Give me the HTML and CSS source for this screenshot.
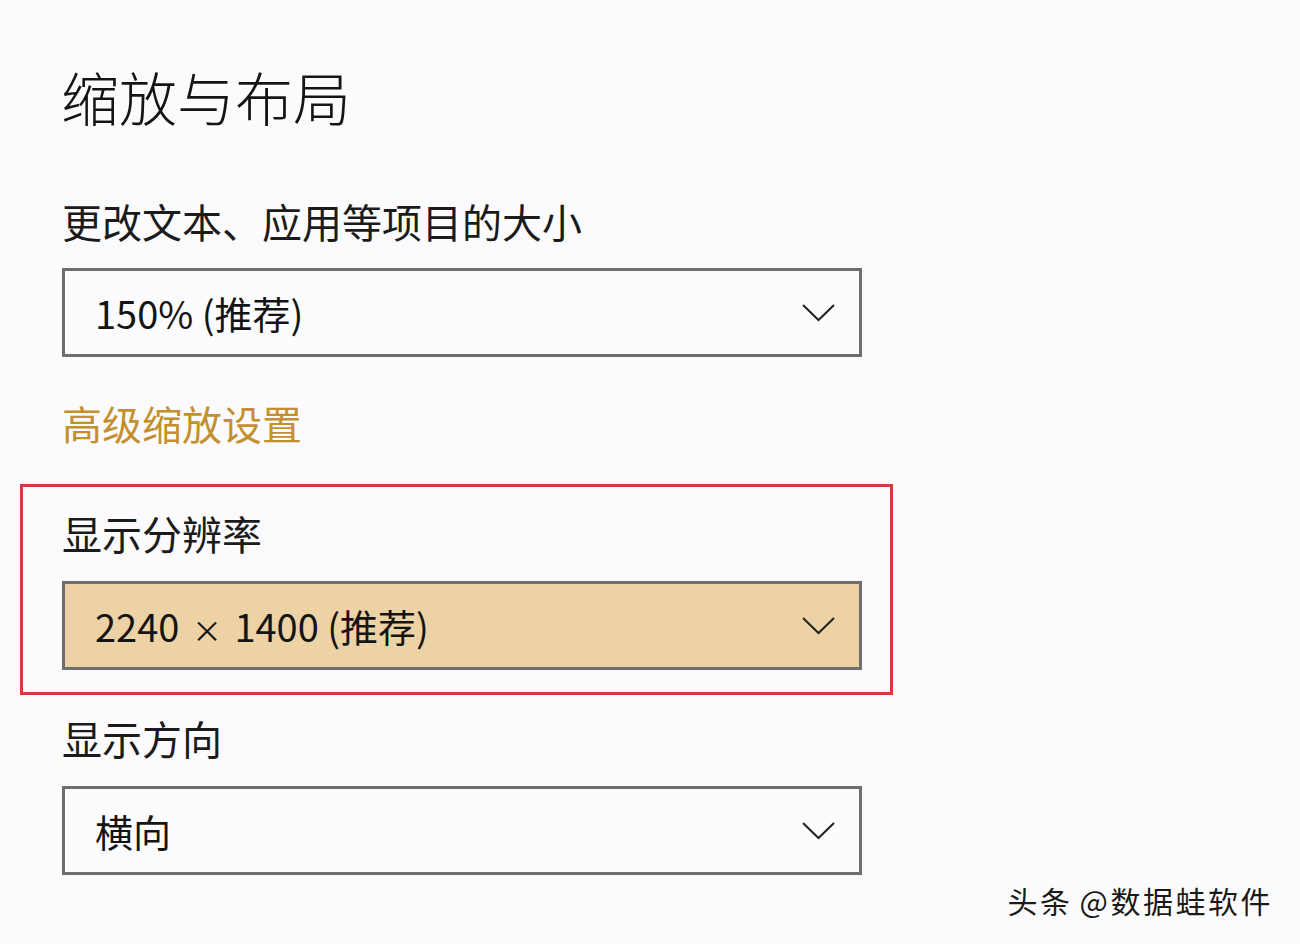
FILE: index.html
```html
<!DOCTYPE html>
<html lang="zh-CN">
<head>
<meta charset="utf-8">
<title>缩放与布局</title>
<link rel="stylesheet" href="styles.css">
</head>
<body>
<main class="page">
  <h1 class="title">缩放与布局</h1>

  <section class="group">
    <div class="label">更改文本、应用等项目的大小</div>
    <div class="select">
      <span class="select-text">150% (推荐)</span>
      <svg class="chevron" width="33" height="18" viewBox="0 0 33 18"><path d="M1 1 L16.5 16 L32 1" fill="none" stroke="#222" stroke-width="2"/></svg>
    </div>
    <a class="link" href="#">高级缩放设置</a>
  </section>

  <section class="group boxed">
    <div class="label">显示分辨率</div>
    <div class="select select-hl">
      <span class="select-text">2240 <span class="times">×</span> 1400 (推荐)</span>
      <svg class="chevron" width="33" height="18" viewBox="0 0 33 18"><path d="M1 1 L16.5 16 L32 1" fill="none" stroke="#222" stroke-width="2"/></svg>
    </div>
  </section>

  <section class="group last">
    <div class="label">显示方向</div>
    <div class="select">
      <span class="select-text">横向</span>
      <svg class="chevron" width="33" height="18" viewBox="0 0 33 18"><path d="M1 1 L16.5 16 L32 1" fill="none" stroke="#222" stroke-width="2"/></svg>
    </div>
  </section>

  <div class="watermark">头条 @数据蛙软件</div>
</main>
</body>
</html>
```

FILE: styles.css
```css
html, body {
  margin: 0;
  padding: 0;
  background: #fbfbfd;
}
body {
  font-family: "Noto Sans CJK SC", "Noto Sans", sans-serif;
  color: #1b1b1b;
  width: 1300px;
  height: 944px;
  overflow: hidden;
}
.page {
  position: relative;
  height: 944px;
  padding-left: 20px;
  box-sizing: border-box;
}
.title {
  margin: 0;
  padding: 61px 0 0 41px;
  font-size: 58px;
  line-height: 70px;
  font-weight: 300;
  height: 70px;
  color: #141414;
}
.group {
  display: flex;
  flex-direction: column;
  align-items: flex-start;
  padding-left: 42px;
}
.group:first-of-type {
  margin-top: 65px;
}
.label {
  font-size: 40px;
  line-height: 50px;
  height: 50px;
  font-weight: 400;
  margin-bottom: 22px;
}
.select {
  width: 800px;
  height: 89px;
  box-sizing: border-box;
  border: 3px solid #6f6f72;
  background: #fcfcfe;
  display: flex;
  align-items: center;
  justify-content: space-between;
  padding: 0 24px 0 30px;
}
.select-hl {
  background: #ecd2a5;
}
.select-text {
  font-size: 38px;
  line-height: 1;
  color: #141414;
}
.times {
  font-size: 30px;
  margin: 0 4px;
}
.chevron {
  display: block;
}
.link {
  margin-top: 41px;
  font-size: 40px;
  line-height: 50px;
  height: 50px;
  color: #c4902f;
  text-decoration: none;
}
.boxed {
  margin-top: 36px;
  width: 873px;
  box-sizing: border-box;
  border: 3px solid #d9393f;
  padding: 21px 0 22px 39px;
}
.boxed .label {
  margin-bottom: 23px;
}
.last {
  margin-top: 18px;
}
.last .label {
  margin-bottom: 23px;
}
.watermark {
  position: absolute;
  right: 27px;
  top: 881px;
  font-size: 30px;
  line-height: 38px;
  color: #1a1a1a;
  text-shadow: 1px 1px 0 #ffffff, -1px 0 0 #ffffff;
  letter-spacing: 2.5px;
  word-spacing: -2px;
}
```
